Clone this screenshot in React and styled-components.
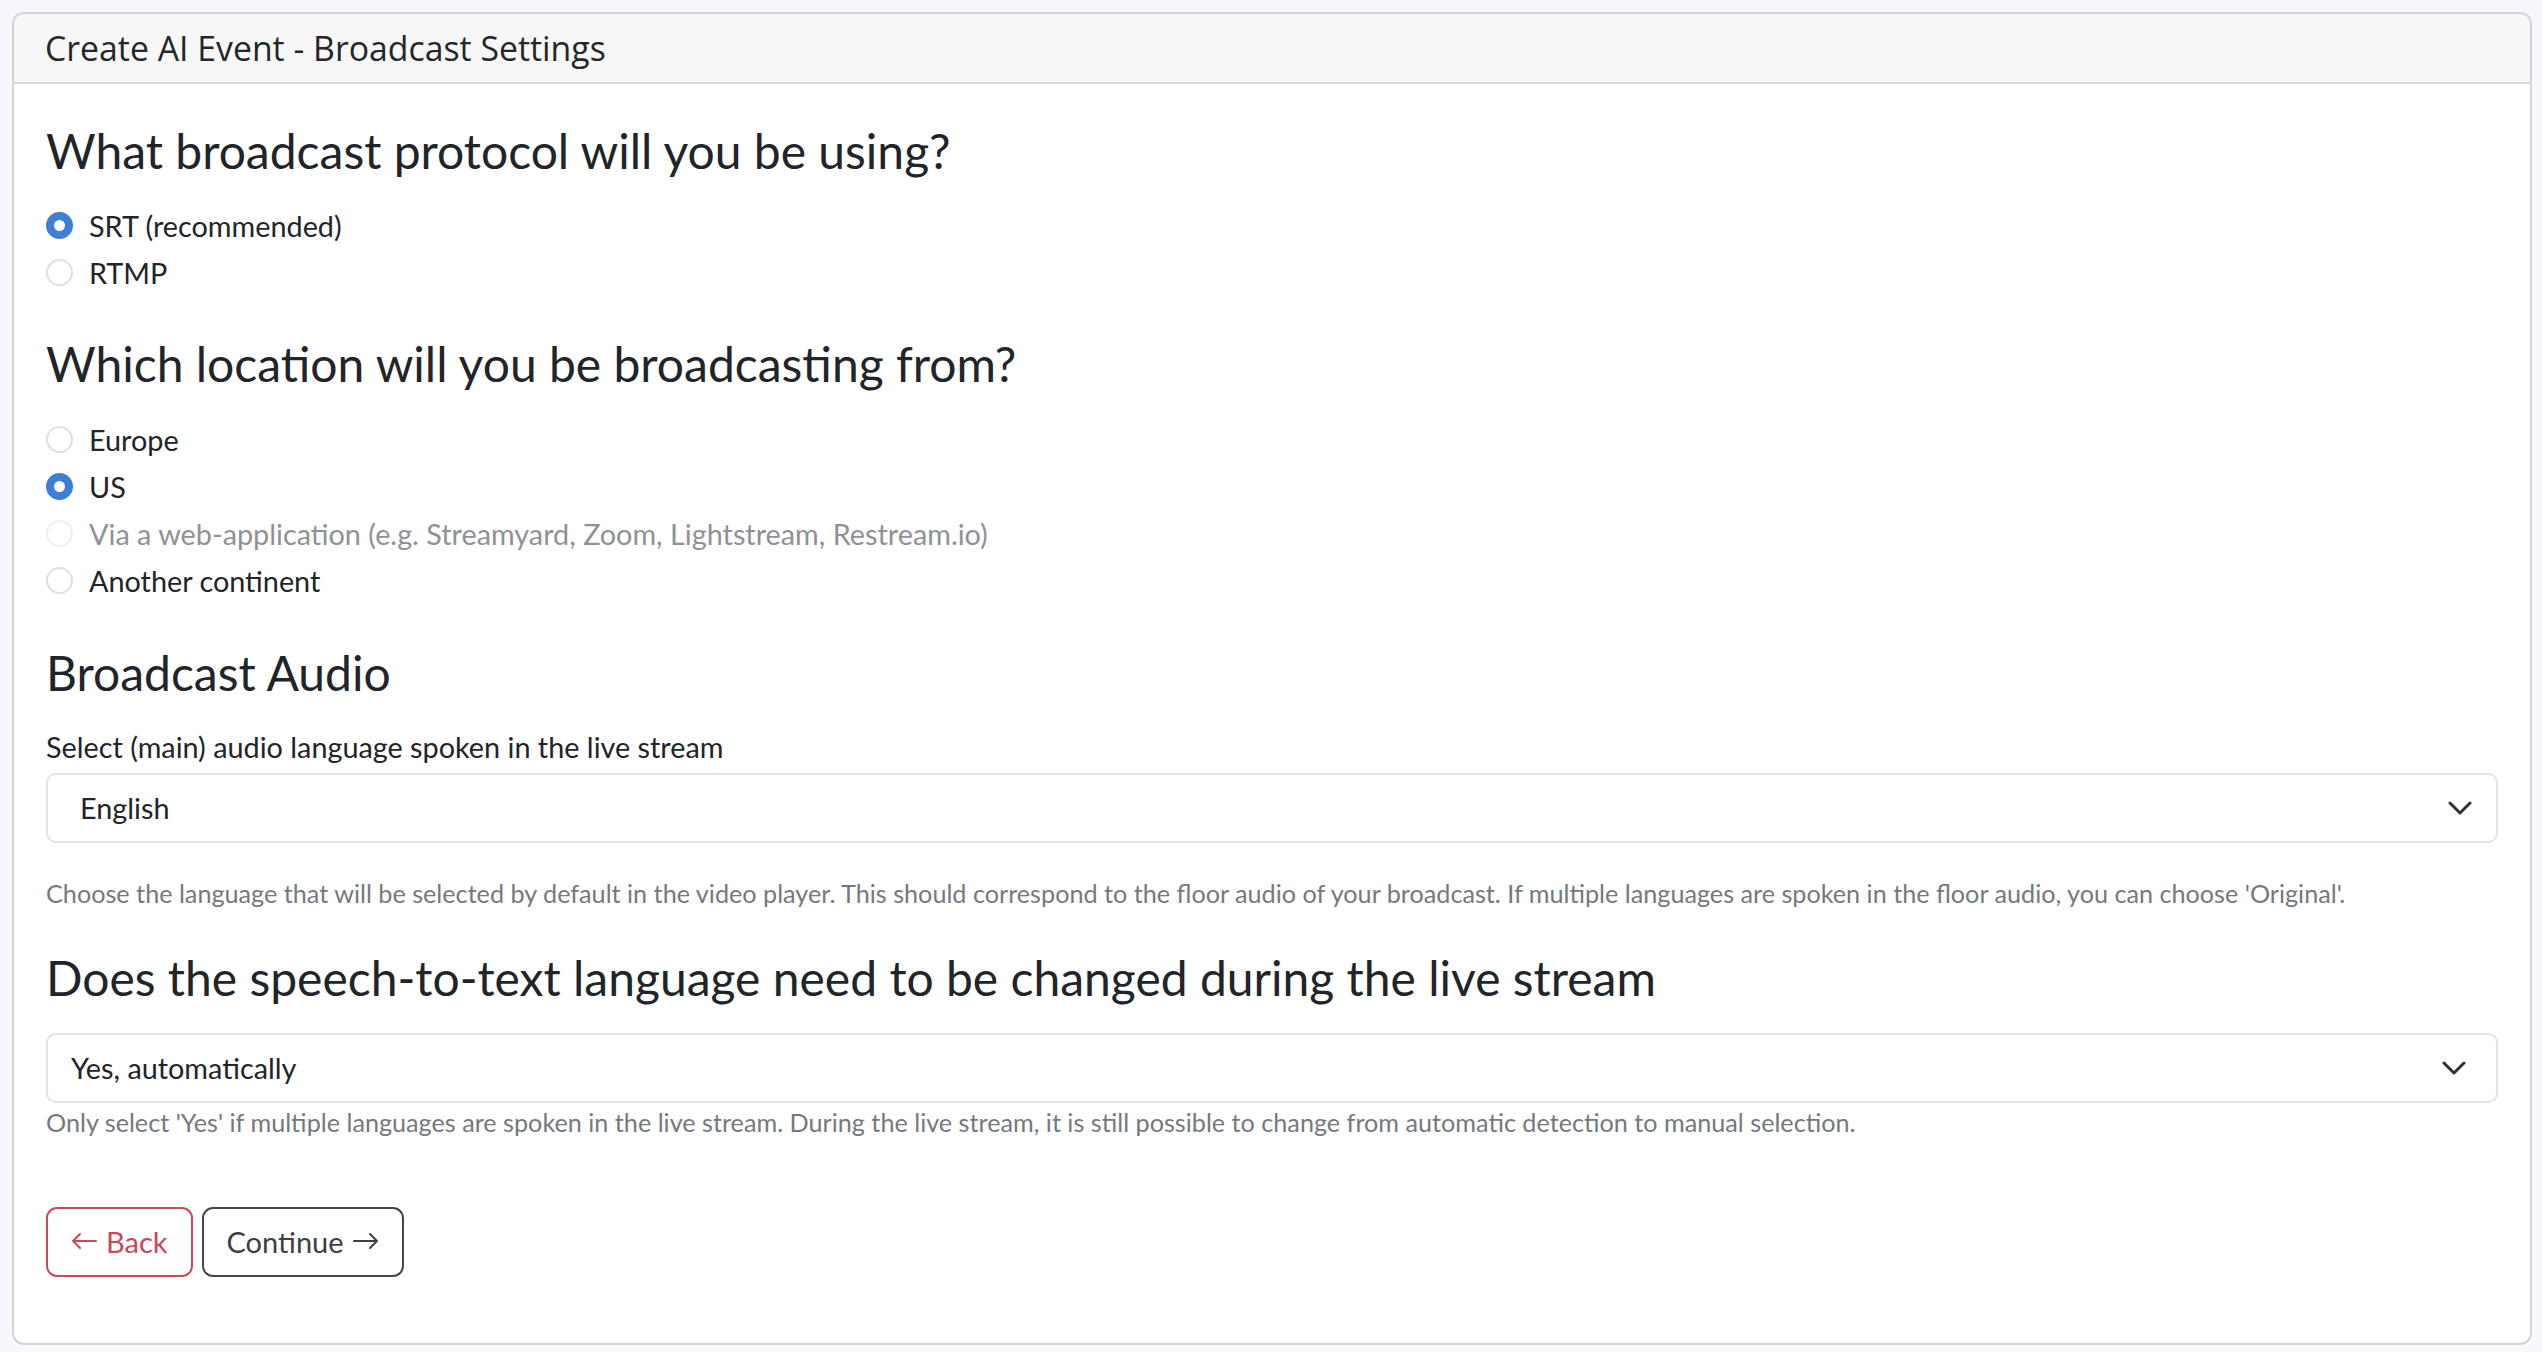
import React from "react";
import styled, { createGlobalStyle } from "styled-components";

const GlobalStyle = createGlobalStyle`
  html, body {
    margin: 0;
    padding: 0;
    background: #f7f8fc;
  }
  body {
    font-family: Lato, "Open Sans", sans-serif;
    color: #212529;
  }
  * { box-sizing: border-box; }
`;

const Page = styled.div`
  padding: 12px 10px 10px 12px;
`;

const Card = styled.section`
  background: #fff;
  border: 2px solid #d4d4d4;
  border-radius: 12px;
  overflow: hidden;
`;

const CardHeader = styled.header`
  height: 70px;
  display: flex;
  align-items: center;
  padding: 0 31px;
  background: #f7f7f7;
  border-bottom: 2px solid #d4d4d4;
  font-family: "Open Sans", sans-serif;
  font-size: 33.8px;
  color: #24272a;
`;

const CardBody = styled.div`
  padding: 38px 32px 66px 32px;
`;

const Heading = styled.h3`
  margin: ${(p) => p.$top || 0}px 0 0 0;
  font-size: 48px;
  font-weight: 400;
  line-height: 58px;
  color: #212529;
`;

const RadioGroup = styled.div`
  display: flex;
  flex-direction: column;
  margin-top: ${(p) => p.$top || 0}px;
`;

const RadioRow = styled.label`
  display: flex;
  align-items: center;
  gap: 16px;
  height: 47px;
  font-size: 28.8px;
  color: ${(p) => (p.$disabled ? "#8e9297" : "#212529")};
`;

const RadioInput = styled.input.attrs({ type: "radio" })`
  appearance: none;
  margin: 0;
  width: 27px;
  height: 27px;
  border-radius: 50%;
  border: 2px solid ${(p) => (p.disabled ? "#eceef0" : "#dcdfe3")};
  background: #fff;
  flex: none;

  &:checked {
    border: 8px solid #3d7fd6;
    background: #fff;
  }
`;

const FieldLabel = styled.div`
  margin-top: 24px;
  font-size: 28.8px;
  line-height: 42px;
  color: #212529;
`;

const SelectBox = styled.div`
  margin-top: ${(p) => p.$top || 0}px;
  height: 70px;
  display: flex;
  align-items: center;
  justify-content: space-between;
  padding: 0 ${(p) => p.$right}px 0 ${(p) => p.$left}px;
  border: 2px solid #e2e3e5;
  border-radius: 10px;
  background: #fff;
  font-size: 28.8px;
  color: #212529;
`;

const HelpText = styled.p`
  margin: ${(p) => p.$top || 0}px 0 0 0;
  font-size: 25.2px;
  line-height: 36px;
  color: #75797e;
`;

const Actions = styled.div`
  display: flex;
  gap: 9px;
  margin-top: 67px;
`;

const Button = styled.button`
  height: 70px;
  display: inline-flex;
  align-items: center;
  gap: 9px;
  padding: 0 23px 2px 23px;
  background: #fff;
  border: 2px solid ${(p) => (p.$danger ? "#c9485b" : "#43474b")};
  border-radius: 11px;
  font-family: Lato, sans-serif;
  font-size: 29px;
  color: ${(p) => (p.$danger ? "#c9485b" : "#3c4045")};
`;

function Chevron() {
  return (
    <svg width="24" height="14" viewBox="0 0 24 14" fill="none">
      <path d="M2 2l10 10L22 2" stroke="#2f3337" strokeWidth="3" strokeLinecap="round" strokeLinejoin="round" />
    </svg>
  );
}

function Arrow({ dir }) {
  const d = dir === "left" ? "M25 9H2M9 2L2 9l7 7" : "M1 9h23M17 2l7 7-7 7";
  return (
    <svg width="26" height="18" viewBox="0 0 26 18" fill="none">
      <path d={d} stroke="currentColor" strokeWidth="2" strokeLinecap="round" strokeLinejoin="round" />
    </svg>
  );
}

const protocols = [
  { id: "srt", label: "SRT (recommended)", checked: true },
  { id: "rtmp", label: "RTMP" },
];

const locations = [
  { id: "eu", label: "Europe" },
  { id: "us", label: "US", checked: true },
  { id: "web", label: "Via a web-application (e.g. Streamyard, Zoom, Lightstream, Restream.io)", disabled: true },
  { id: "other", label: "Another continent" },
];

function Radios({ name, items, top }) {
  return (
    <RadioGroup $top={top}>
      {items.map((item) => (
        <RadioRow key={item.id} $disabled={item.disabled}>
          <RadioInput name={name} defaultChecked={!!item.checked} disabled={item.disabled} />
          <span>{item.label}</span>
        </RadioRow>
      ))}
    </RadioGroup>
  );
}

export default function App() {
  return (
    <>
      <GlobalStyle />
      <Page>
        <Card>
          <CardHeader>Create AI Event - Broadcast Settings</CardHeader>
          <CardBody>
            <Heading>What broadcast protocol will you be using?</Heading>
            <Radios name="protocol" items={protocols} top={22} />

            <Heading $top={39}>Which location will you be broadcasting from?</Heading>
            <Radios name="location" items={locations} top={23} />

            <Heading $top={40}>Broadcast Audio</Heading>
            <FieldLabel>Select (main) audio language spoken in the live stream</FieldLabel>
            <SelectBox $top={5} $left={32} $right={24}>
              <span>English</span>
              <Chevron />
            </SelectBox>
            <HelpText $top={32}>
              Choose the language that will be selected by default in the video player. This should correspond to the floor audio of your broadcast. If multiple languages are spoken in the floor audio, you can choose 'Original'.
            </HelpText>

            <Heading $top={38}>Does the speech-to-text language need to be changed during the live stream</Heading>
            <SelectBox $top={26} $left={23} $right={30}>
              <span>Yes, automatically</span>
              <Chevron />
            </SelectBox>
            <HelpText $top={1}>
              Only select 'Yes' if multiple languages are spoken in the live stream. During the live stream, it is still possible to change from automatic detection to manual selection.
            </HelpText>

            <Actions>
              <Button $danger>
                <Arrow dir="left" />
                Back
              </Button>
              <Button>
                Continue
                <Arrow dir="right" />
              </Button>
            </Actions>
          </CardBody>
        </Card>
      </Page>
    </>
  );
}
